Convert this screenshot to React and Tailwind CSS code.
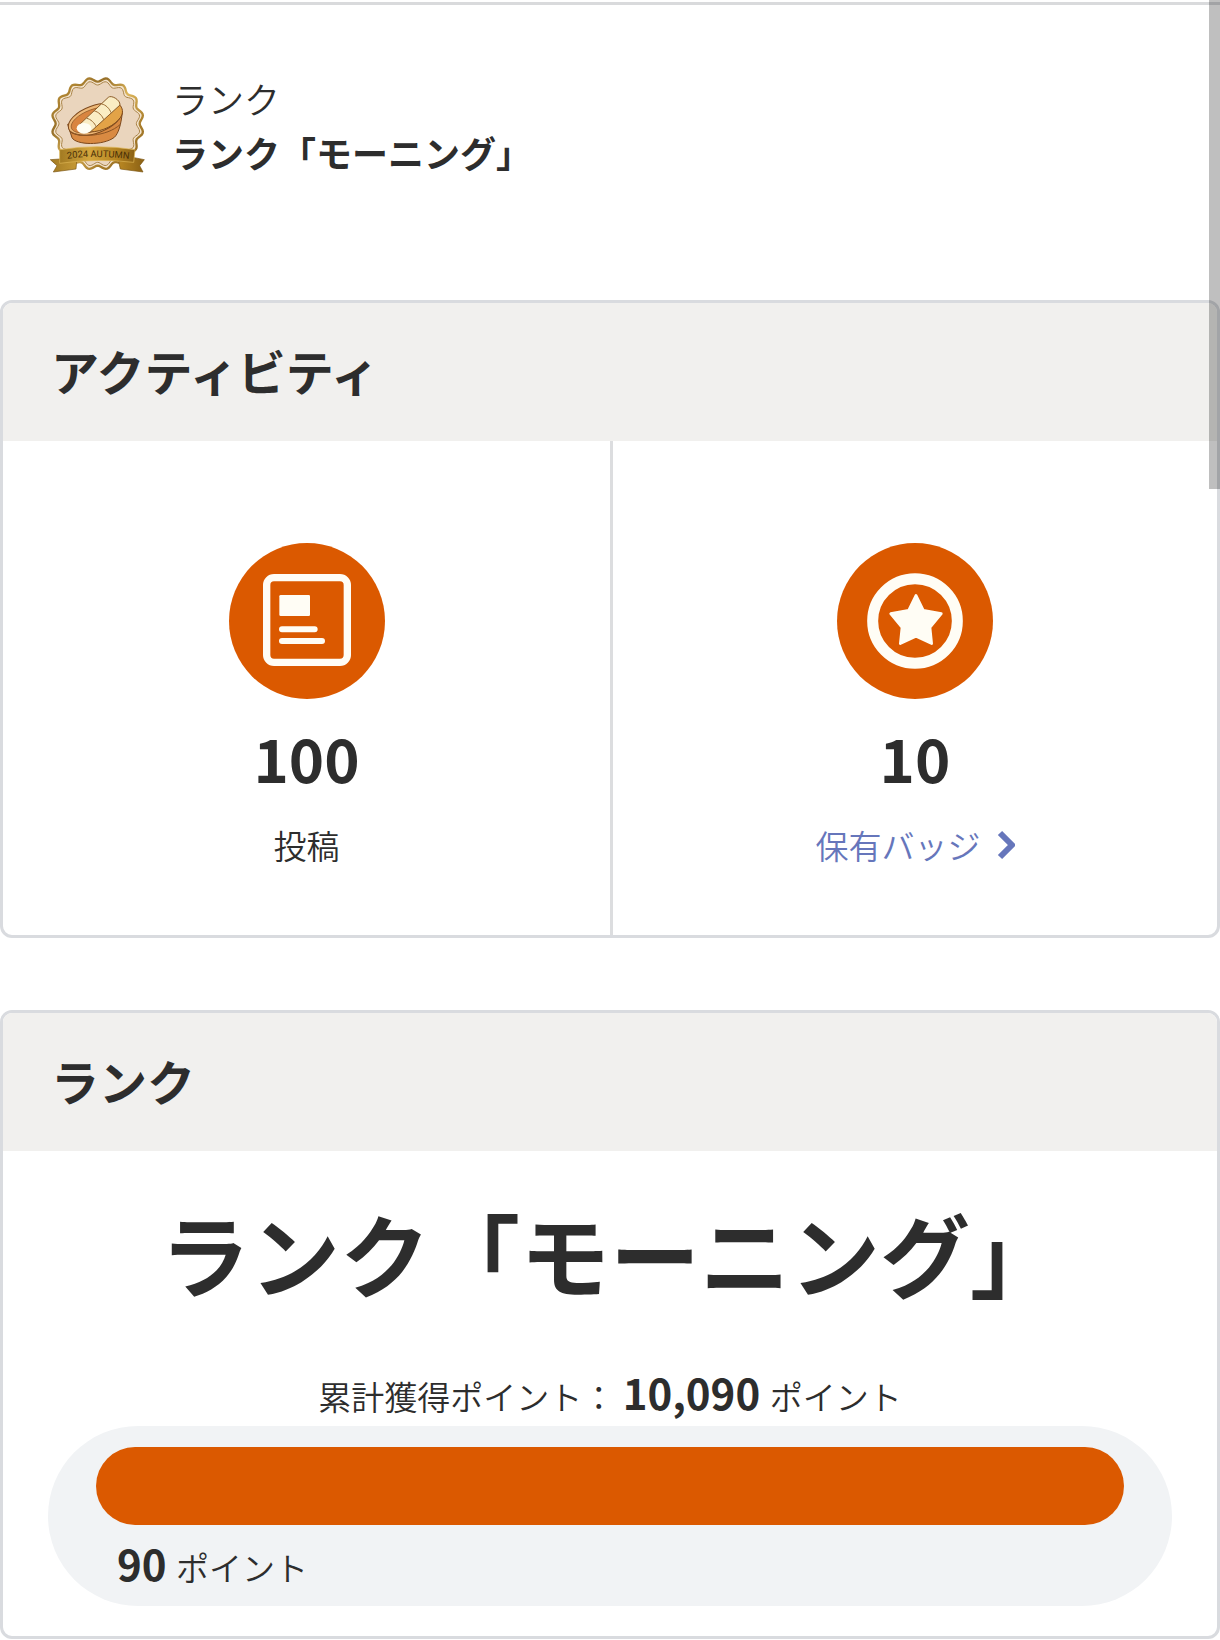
// Profile page: current rank, activity counters and the points bar.

const FONT = "font-['Noto_Sans_CJK_JP','Noto_Sans',sans-serif]";

const POINTS = { total: '10,090', remaining: '90', percent: 100 };

export default function App() {
  return (
    <main className={`relative bg-white text-[#2d2d2d] pt-[2px] font-[350] ${FONT}`}>
      <RankSummary />
      <div className="flex flex-col gap-[72px]">
        <Card title="アクティビティ">
          <div className="grid grid-cols-2">
            <Stat icon={<PostIcon />} value="100">
              <span>投稿</span>
            </Stat>
            <div className="border-l-[3px] border-[#dcdddf]">
              <Stat icon={<BadgeIcon />} value="10">
                <a href="#badges" className="flex items-center gap-4 text-[#6676bb]">
                  保有バッジ
                  <Chevron />
                </a>
              </Stat>
            </div>
          </div>
        </Card>
        <Card title="ランク">
          <div className="px-[45px] pb-[30px] text-center">
            <p className="pt-[35px] text-[90px] leading-[132px] font-bold whitespace-nowrap">ランク「モーニング」</p>
            <p className="pt-[44px] text-[33px] leading-[60px]">
              累計獲得ポイント： <b className="text-[42px]">{POINTS.total} </b>ポイント
            </p>
            <div className="h-[180px] rounded-[90px] bg-[#f1f3f5] px-[48px] pt-[21px]">
              <div className="h-[78px] rounded-full bg-[#db5900]" style={{ width: `${POINTS.percent}%` }} />
              <p className="pt-[8px] pl-[21px] text-left text-[33px] leading-[60px]">
                <b className="text-[42px]">{POINTS.remaining} </b>ポイント
              </p>
            </div>
          </div>
        </Card>
      </div>
      {/* overlay scrollbar thumb */}
      <div className="absolute top-0 right-0 w-[11px] h-[489px] bg-black/25" />
    </main>
  );
}

function RankSummary() {
  return (
    <header className="flex items-center gap-[26px] border-t-[3px] border-[#d9dadc] pt-[66px] pb-[121px] pl-[49px]">
      <AutumnBadge />
      <div className="text-[36px] leading-[54px]">
        <p>ランク</p>
        <p className="font-bold">ランク「モーニング」</p>
      </div>
    </header>
  );
}

function Card({ title, children }) {
  return (
    <section className="border-[3px] border-[#d9dbdf] rounded-xl overflow-hidden">
      <h2 className="bg-[#f1f0ee] px-[48px] pt-[32px] pb-[36px] text-[48px] leading-[70px] font-bold">{title}</h2>
      {children}
    </section>
  );
}

function Stat({ icon, value, children }) {
  return (
    <div className="flex flex-col items-center pt-[102px] pb-[63px]">
      {icon}
      <b className="mt-4 text-[60px] leading-[84px]">{value}</b>
      <div className="mt-[19px] text-[33px] leading-[54px]">{children}</div>
    </div>
  );
}

function PostIcon() {
  return (
    <svg className="size-[156px]" viewBox="0 0 468 468" aria-hidden="true">
      <circle cx="234" cy="234" r="234" fill="#db5900" />
      <rect x="113" y="104" width="242" height="254" rx="22" fill="none" stroke="#fffdf5" strokeWidth="22" />
      <rect x="151" y="156" width="92" height="63" rx="4" fill="#fffdf5" />
      <path d="M159 259h98M159 294h120" stroke="#fffdf5" strokeWidth="18" strokeLinecap="round" />
    </svg>
  );
}

function BadgeIcon() {
  return (
    <svg className="size-[156px]" viewBox="0 0 468 468" aria-hidden="true">
      <circle cx="234" cy="234" r="234" fill="#db5900" />
      <circle cx="234" cy="234" r="127" fill="none" stroke="#fffdf5" strokeWidth="33" />
      <path
        d="M237 157l22 45 54 10-34 41 5 49-47-22-47 22 5-49-34-41 54-10z"
        fill="#fffdf5"
        stroke="#fffdf5"
        strokeWidth="8"
        strokeLinejoin="round"
      />
    </svg>
  );
}

function Chevron() {
  return (
    <svg className="w-[18px] h-[30px]" viewBox="0 0 18 30" fill="none" aria-hidden="true">
      <path d="M3 3l12 12L3 27" stroke="#6676bb" strokeWidth="6" strokeLinejoin="round" />
    </svg>
  );
}

// Wavy seal outline around (cx, cy), with a notch at the top
function seal(cx, cy, r, depth, waves) {
  const pts = [];
  for (let a = 0; a < 360; a += 2) {
    const t = (a * Math.PI) / 180;
    const d = r - depth * Math.cos(waves * t);
    pts.push(`${(cx + d * Math.sin(t)).toFixed(1)} ${(cy - d * Math.cos(t)).toFixed(1)}`);
  }
  return `M${pts.join('L')}z`;
}

function AutumnBadge() {
  return (
    <svg className="size-[97px]" viewBox="28 36 291 291" role="img" aria-label="2024 AUTUMN">
      <defs>
        <linearGradient id="gold" x1="0" y1="0" x2="1" y2="1">
          <stop offset="0" stopColor="#c79a3c" />
          <stop offset="0.3" stopColor="#97702a" />
          <stop offset="0.5" stopColor="#dcb55a" />
          <stop offset="0.75" stopColor="#a87d2c" />
          <stop offset="1" stopColor="#8b6420" />
        </linearGradient>
        <linearGradient id="ribbon" x1="0" y1="0" x2="1" y2="0">
          <stop offset="0" stopColor="#a27a22" />
          <stop offset="0.4" stopColor="#d3a53d" />
          <stop offset="0.75" stopColor="#b58421" />
          <stop offset="1" stopColor="#8a6014" />
        </linearGradient>
        <path id="ribbon-line" d="M83 281Q172 270 266 282" />
      </defs>
      <path d={seal(174, 176, 132, 6, 16)} fill="#f3e3cd" stroke="url(#gold)" strokeWidth="7" />
      <path d={seal(174, 176, 122, 6, 16)} fill="#ead5bd" stroke="#a98347" strokeWidth="3" />
      {/* bowl */}
      <path d="M84 178L97 218C108 240 190 243 224 217C236 206 244 180 248 142z" fill="#d98a42" stroke="#7c481c" strokeWidth="3" />
      <ellipse cx="166" cy="163" rx="84" ry="41" transform="rotate(-20 166 163)" fill="#eeb877" stroke="#7c481c" strokeWidth="3" />
      <ellipse cx="163" cy="165" rx="72" ry="32" transform="rotate(-20 163 165)" fill="#d98540" stroke="#8b5423" strokeWidth="2" />
      <path d="M91 199c30 20 110 16 150-20" fill="none" stroke="#8b5423" strokeWidth="3" />
      {/* bread */}
      <path d="M150 201L238 118C250 128 252 144 242 158C226 180 190 200 150 201z" fill="#e3a347" stroke="#7c481c" strokeWidth="3" />
      <path d="M117 181L206 97C214 89 242 104 241 120L151 202C134 203 118 197 117 181z" fill="#faedc4" stroke="#8b5b28" strokeWidth="3" />
      <path d="M141 160c12 2 24 14 29 26M164 138c12 2 24 14 28 26M186 117c12 2 24 14 28 26" fill="none" stroke="#9c6c34" strokeWidth="3" />
      <ellipse cx="133" cy="190" rx="22" ry="16" fill="#fffdf2" />
      {/* ribbon */}
      <path d="M62 282L32 284l20 18-11 19 68-9 2-22zM284 278l30 6-14 18 10 19-68-9-5-22z" fill="url(#ribbon)" stroke="#7a5512" strokeWidth="2" />
      <path d="M60 254q112-18 226 0l-4 38q-110-13-222 3z" fill="url(#ribbon)" stroke="#e0b654" strokeWidth="2" />
      <text className="font-[Roboto,sans-serif] font-normal" fontSize="28" fill="#4a3008">
        <textPath href="#ribbon-line">2024 AUTUMN</textPath>
      </text>
    </svg>
  );
}
